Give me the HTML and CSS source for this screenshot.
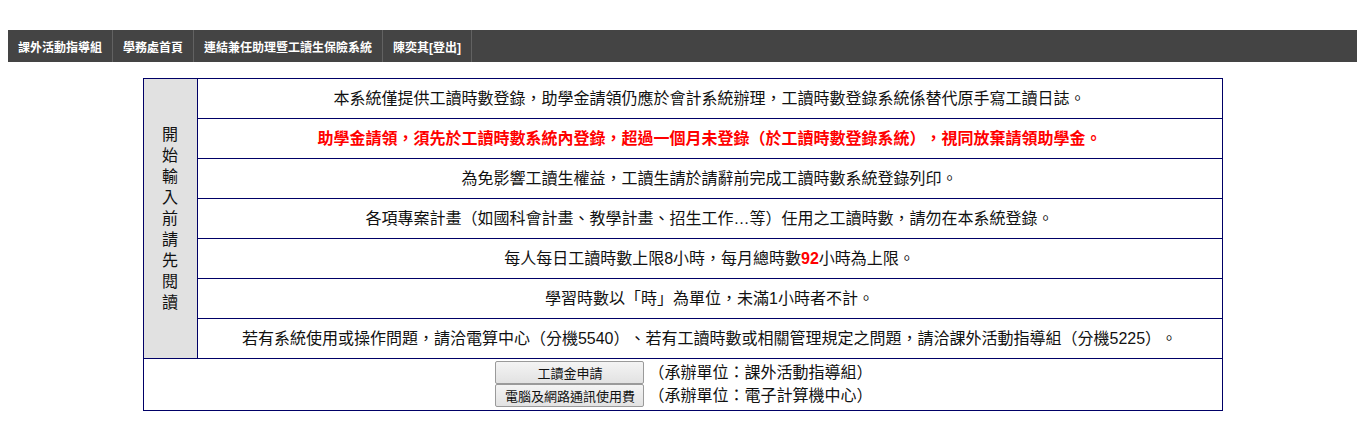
FILE: index.html
```html
<!DOCTYPE html>
<html lang="zh-TW">
<head>
<meta charset="utf-8">
<title>工讀時數登錄</title>
<link rel="stylesheet" href="styles.css">
</head>
<body>
<div class="top-space"></div>
<nav class="navbar">
  <a class="nav-item" href="#">課外活動指導組</a>
  <a class="nav-item" href="#">學務處首頁</a>
  <a class="nav-item" href="#">連結兼任助理暨工讀生保險系統</a>
  <a class="nav-item" href="#">陳奕其[登出]</a>
</nav>
<table class="notice">
  <tr>
    <td class="label" rowspan="7">開<br>始<br>輸<br>入<br>前<br>請<br>先<br>閱<br>讀</td>
    <td class="row">本系統僅提供工讀時數登錄，助學金請領仍應於會計系統辦理，工讀時數登錄系統係替代原手寫工讀日誌。</td>
  </tr>
  <tr><td class="row red">助學金請領，須先於工讀時數系統內登錄，超過一個月未登錄（於工讀時數登錄系統），視同放棄請領助學金。</td></tr>
  <tr><td class="row">為免影響工讀生權益，工讀生請於請辭前完成工讀時數系統登錄列印。</td></tr>
  <tr><td class="row">各項專案計畫（如國科會計畫、教學計畫、招生工作…等）任用之工讀時數，請勿在本系統登錄。</td></tr>
  <tr><td class="row">每人每日工讀時數上限8小時，每月總時數<span class="hl">92</span>小時為上限。</td></tr>
  <tr><td class="row">學習時數以「時」為單位，未滿1小時者不計。</td></tr>
  <tr><td class="row">若有系統使用或操作問題，請洽電算中心（分機5540）、若有工讀時數或相關管理規定之問題，請洽課外活動指導組（分機5225）。</td></tr>
  <tr>
    <td class="actions" colspan="2">
      <div class="action-line"><button class="btn" type="button">工讀金申請</button><span class="unit">（承辦單位：課外活動指導組）</span></div>
      <div class="action-line"><button class="btn" type="button">電腦及網路通訊使用費</button><span class="unit">（承辦單位：電子計算機中心）</span></div>
    </td>
  </tr>
</table>
</body>
</html>
```
FILE: styles.css
```css
html, body {
  margin: 0;
  padding: 0;
  background: #ffffff;
}
body {
  margin: 8px;
  font-family: "Liberation Sans", "Noto Sans CJK TC", sans-serif;
  color: #111;
  text-spacing-trim: space-all;
}
.top-space {
  height: 22px;
}
.navbar {
  display: flex;
  height: 32px;
  background: #444444;
}
.nav-item {
  display: flex;
  align-items: center;
  padding: 0 10px;
  color: #ffffff;
  font-size: 12px;
  font-weight: bold;
  text-decoration: none;
  border-right: 1px solid #626262;
}
.notice {
  margin: 16px auto 0;
  width: 1080px;
  border-collapse: collapse;
  border: 1px solid #000066;
  font-size: 16px;
}
.notice td {
  border: 1px solid #000066;
}
.label {
  width: 53px;
  padding: 0;
  background: #e1e1e1;
  text-align: center;
  vertical-align: middle;
  line-height: 21px;
}
.row {
  height: 39px;
  padding: 0;
  text-align: center;
  vertical-align: middle;
  line-height: 20px;
}
.red {
  color: #ff0000;
  font-weight: bold;
}
.hl {
  color: #ff0000;
  font-weight: bold;
}
.actions {
  padding: 2px 0 3px;
  text-align: center;
  vertical-align: top;
}
.action-line {
  display: flex;
  justify-content: center;
  align-items: center;
  height: 23px;
  padding-left: 3px;
}
.btn {
  width: 149px;
  height: 23px;
  margin: 0;
  padding: 0;
  font-family: "Liberation Sans", "Noto Sans CJK TC", sans-serif;
  font-size: 13px;
  color: #111;
  background: linear-gradient(#f4f4f4, #e2e2e2);
  border: 1px solid #9a9a9a;
  border-radius: 2px;
}
.unit {
  margin-left: 4px;
  font-size: 16px;
  line-height: 20px;
}
```
